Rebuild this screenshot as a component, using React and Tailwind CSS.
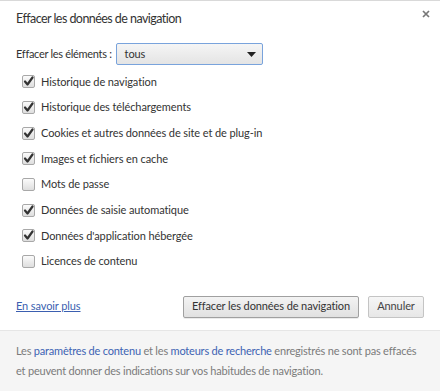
const items = [
  { label: "Historique de navigation", checked: true },
  { label: "Historique des téléchargements", checked: true },
  { label: "Cookies et autres données de site et de plug-in", checked: true },
  { label: "Images et fichiers en cache", checked: true },
  { label: "Mots de passe", checked: false },
  { label: "Données de saisie automatique", checked: true },
  { label: "Données d'application hébergée", checked: true },
  { label: "Licences de contenu", checked: false },
];

const Checkbox = ({ checked }) => (
  <span className="w-[13px] h-[13px] rounded-[2px] border border-[#a8a8a8] bg-gradient-to-b from-[#fbfbfb] to-[#dedede] flex items-center justify-center shrink-0">
    {checked && (
      <svg width="11" height="11" viewBox="0 0 11 11">
        <path d="M2 5.5 L4.5 8.5 L9.5 1.5" fill="none" stroke="#333" strokeWidth="2.2" strokeLinecap="round" strokeLinejoin="round" />
      </svg>
    )}
  </span>
);

export default function App() {
  return (
    <div className="w-[440px] h-[391px] bg-white border-t border-[#d9d9d9] flex flex-col font-['Lato',sans-serif] text-[#333]">
      {/* HEADER */}
      <div className="flex justify-between items-start pl-4 pr-[10px] pt-[8px]">
        <h1 className="text-[12.5px] tracking-[-0.55px] text-[#333] leading-[20px]">Effacer les données de navigation</h1>
        <svg width="8" height="8" viewBox="0 0 8 8" className="mt-[1px]">
          <path d="M1 1 L7 7 M7 1 L1 7" stroke="#777" strokeWidth="1.7" />
        </svg>
      </div>

      {/* BODY */}
      <div className="px-4 pt-[14px] flex-1 text-[11px] tracking-[-0.1px]">
        <div className="flex items-center gap-[4px]">
          <span className="tracking-[-0.3px]">Effacer les éléments :</span>
          <div className="w-[147px] h-[22px] border border-[#79a3dc] rounded-[2px] bg-gradient-to-b from-[#f5f5f5] to-[#e4e4e4] flex items-center justify-between pl-[8px] pr-[6px]">
            <span>tous</span>
            <svg width="9" height="5" viewBox="0 0 9 5">
              <path d="M0 0 H9 L4.5 5 Z" fill="#222" />
            </svg>
          </div>
        </div>

        <div className="flex flex-col mt-[4px] pl-[6px]">
          {items.map((it) => (
            <div key={it.label} className="flex items-center gap-[6px] h-[25.7px]">
              <Checkbox checked={it.checked} />
              <span>{it.label}</span>
            </div>
          ))}
        </div>

        <div className="flex items-center justify-between mt-[21px]">
          <a className="text-[#3b5fb0] underline">En savoir plus</a>
          <div className="flex gap-[9px]">
            <button className="w-[176px] h-[22px] whitespace-nowrap border border-[#a0a0a0] rounded-[2px] bg-gradient-to-b from-[#f3f3f3] to-[#e1e1e1] text-[#333] shadow-[0_1px_0_rgba(0,0,0,0.08)]">
              Effacer les données de navigation
            </button>
            <button className="w-[56px] h-[22px] border border-[#c4c4c4] rounded-[2px] bg-gradient-to-b from-[#f6f6f6] to-[#e7e7e7] text-[#444]">
              Annuler
            </button>
          </div>
        </div>
      </div>

      {/* FOOTER */}
      <div className="h-[61px] bg-[#f5f5f5] border-t border-[#e6e6e6] px-4 pt-[10px] text-[11px] tracking-[-0.2px] leading-[20px] text-[#7b7b7b] whitespace-nowrap">
        Les <span className="text-[#3d63b3]">paramètres de contenu</span> et les{" "}
        <span className="text-[#3d63b3]">moteurs de recherche</span> enregistrés ne sont pas effacés
        <br />
        et peuvent donner des indications sur vos habitudes de navigation.
      </div>
    </div>
  );
}
